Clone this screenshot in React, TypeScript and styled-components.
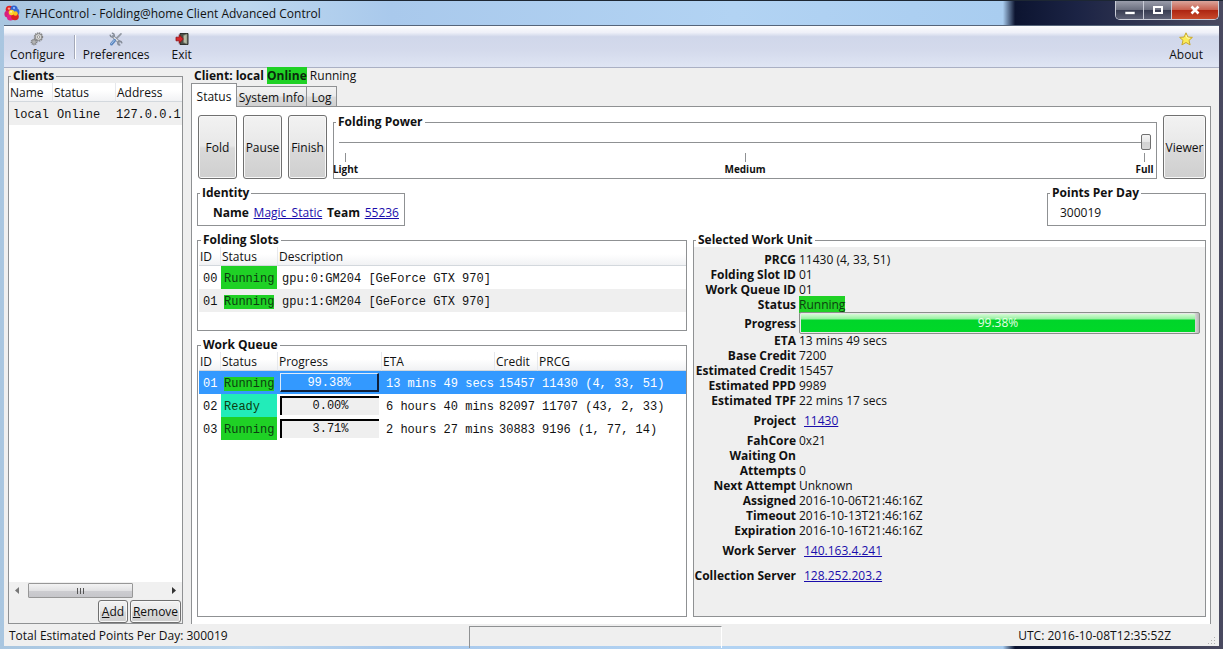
import React from 'react';
import styled, { createGlobalStyle, css } from 'styled-components';

const LINE = '#8f9193';
const FACE = '#efefef';
const GREEN = '#1fd125';
const TEAL = '#22ecb9';

const Global = createGlobalStyle`
  * { box-sizing: border-box; }
  body { margin: 0; }
  body, button, input { font: 12px/15px "Open Sans", "Segoe UI", sans-serif; color: #111; }
`;

const Window = styled.div`
  display: flex;
  flex-direction: column;
  min-height: 100vh;
  padding: 0 4px 3px;
  border-top: 1px solid #1d2733;
  background: linear-gradient(90deg, #a9c6e0 0, #bdd7ee 20%, #a9c9ec 32%, #b2d3f3 60%, #a9cdf0 82%, #0c1430 83%, #1b2344 88%, #4a4a60 100%);
`;

const TitleBar = styled.header`
  display: flex;
  align-items: flex-start;
  height: 25px;
  border-bottom: 1px solid #56657a;
`;

const TitleText = styled.h1`
  display: flex;
  align-items: center;
  gap: 5px;
  flex: 1;
  margin: 0;
  height: 24px;
  font-size: 12px;
  font-weight: 400;
  white-space: nowrap;
`;

const Caption = styled.div`
  display: flex;
  border: 1px solid #c9ccd6;
  border-top: 0;
  border-radius: 0 0 5px 5px;
  overflow: hidden;
`;

const CaptionButton = styled.button<{ $close?: boolean }>`
  display: grid;
  place-items: center;
  width: ${p => (p.$close ? 46 : 28)}px;
  height: 18px;
  padding: 0;
  border: 0;
  border-right: ${p => (p.$close ? 0 : 1)}px solid #c9ccd6;
  background: ${p => p.$close
    ? 'linear-gradient(#dba59b 0, #c8614f 48%, #ac2410 50%, #c84a2c 100%)'
    : 'linear-gradient(#9a9dab 0, #6c7080 48%, #363b50 50%, #5d6175 100%)'};
`;

const Client = styled.div`
  display: flex;
  flex-direction: column;
  flex: 1;
  background: ${FACE};
`;

const Toolbar = styled.nav`
  display: flex;
  align-items: center;
  height: 42px;
  padding: 0 12px 0 2px;
  border-bottom: 1px solid #aab0c4;
  background: linear-gradient(#fdfdfe 0, #eef0f8 16%, #d0d7ea 26%, #d4daec 60%, #dfe5f4 100%);
`;

const ToolButton = styled.button<{ $gap?: number; $end?: boolean }>`
  display: flex;
  flex-direction: column;
  align-items: center;
  padding: 0 4px;
  margin-left: ${p => (p.$end ? 'auto' : `${p.$gap || 0}px`)};
  border: 0;
  background: none;
  svg { display: block; }
`;

const ToolSeparator = styled.span`
  width: 2px;
  height: 24px;
  margin-left: 5px;
  border-left: 1px solid #a3a8b8;
  border-right: 1px solid #fff;
`;

const Body = styled.main`
  display: flex;
  flex: 1;
  gap: 8px;
  padding: 0 8px 0 4px;
`;

const Frame = styled.fieldset`
  display: flex;
  flex-direction: column;
  min-width: 0;
  margin: 0;
  padding: 0;
  border: 1px solid ${LINE};
`;

const Legend = styled.legend`
  margin-left: 2px;
  padding: 0 2px;
  height: 14px;
  line-height: 14px;
  font-weight: 700;
  white-space: nowrap;
`;

const Sidebar = styled(Frame)`
  width: 175px;
  margin-top: 1px;
`;

const ClientList = styled.div`
  flex: 1;
  overflow: hidden;
  background: #fff;
`;

const Grid = styled.table`
  width: 100%;
  table-layout: fixed;
  border-collapse: separate;
  border-spacing: 0;
  white-space: nowrap;
`;

const HeadCell = styled.th`
  height: 19px;
  padding: 1px 2px 0 1px;
  font-weight: 400;
  text-align: left;
  border-right: 1px solid #e6e8ec;
  border-bottom: 1px solid #d3d8dd;
  background: linear-gradient(#fff 40%, #f1f2f4);
  &:last-child { border-right: 0; }
`;

const Row = styled.tr<{ $tone?: 'odd' | 'selected' }>`
  background: ${p => (p.$tone === 'selected' ? '#3399ff' : p.$tone === 'odd' ? FACE : '#fff')};
  color: ${p => (p.$tone === 'selected' ? '#fff' : '#111')};
`;

const Cell = styled.td`
  height: 23px;
  padding: 2px 0 0 4px;
  overflow: hidden;
  font: 12px/16px "Liberation Mono", "Courier New", monospace;
`;

const AddressCell = styled(Cell)`
  padding-left: 0;
`;

const BarCell = styled(Cell)`
  padding: 0 3px 0 2px;
`;

const StatusCell = styled(Cell)<{ $fill?: string }>`
  color: #0c3d10;
  padding-left: 3px;
  ${p => p.$fill && css`background: ${p.$fill}; border-right: 1px solid #fff;`}
`;

const Mark = styled.span`
  background: ${GREEN};
  color: #0c3d10;
`;

const StrongMark = styled(Mark)`
  color: #0a2a0c;
`;

const CellBar = styled.div<{ $selected?: boolean }>`
  height: 19px;
  line-height: 17px;
  text-align: center;
  background: ${p => (p.$selected ? '#3399ff' : FACE)};
  border: solid #000;
  border-width: 2px 0 0 2px;
  ${p => p.$selected && css`
    line-height: 19px;
    border-width: 1px 2px 2px 1px;
    border-color: #dcebfb #10203a #10203a #dcebfb;
  `}
`;

const Scroll = styled.div`
  display: flex;
  align-items: center;
  justify-content: space-between;
  height: 17px;
  padding: 0 6px;
  background: #f0f0f0;
`;

const ScrollThumb = styled.div`
  display: flex;
  justify-content: center;
  align-items: center;
  gap: 2px;
  width: 105px;
  height: 15px;
  margin: 0 36px 0 5px;
  border: 1px solid #979797;
  border-radius: 1px;
  background: linear-gradient(#f3f3f3 0, #e2e2e4 50%, #cdcdd1 52%, #c6c6ca 100%);
  i { width: 1px; height: 6px; background: #555; }
`;

const PushButton = styled.button<{ $w?: number }>`
  width: ${p => (p.$w ? `${p.$w}px` : 'auto')};
  padding: 0;
  border: 1px solid #707070;
  border-radius: 3px;
  box-shadow: inset 0 0 0 1px #f8f8f8;
  background: linear-gradient(#f2f2f2 0, #e8e8e8 48%, #dadada 52%, #cfcfcf 100%);
  white-space: nowrap;
`;

const SideActions = styled.div`
  display: flex;
  justify-content: flex-end;
  gap: 2px;
  height: 24px;
  padding: 1px 1px 0;
`;

const Content = styled.section`
  display: flex;
  flex-direction: column;
  flex: 1;
  min-width: 0;
`;

const Heading = styled.h2`
  margin: 0;
  padding: 1px 0 0 3px;
  height: 15px;
  font-size: 12px;
  line-height: 14px;
`;

const Activity = styled.span`
  font-weight: 400;
`;

const Tabs = styled.div`
  display: flex;
  align-items: flex-end;
  height: 23px;
`;

const Tab = styled.button<{ $active?: boolean; $w: number }>`
  width: ${p => p.$w}px;
  height: 20px;
  padding: 1px 0 0;
  border: 1px solid ${LINE};
  border-left-width: 0;
  border-bottom: 0;
  background: linear-gradient(#f2f2f2 0, #ebebeb 48%, #dcdcdc 52%, #d0d0d0 100%);
  white-space: nowrap;
  ${p => p.$active && css`
    height: 24px;
    margin-bottom: -1px;
    padding: 2px 0 0;
    border-left-width: 1px;
    background: #fff;
    z-index: 1;
  `}
`;

const Panel = styled.div`
  display: flex;
  flex-direction: column;
  flex: 1;
  gap: 7px;
  padding: 8px 4px 7px 5px;
  border: 1px solid ${LINE};
  border-bottom: 0;
  background: #fff;
`;

const Controls = styled.div`
  display: flex;
  gap: 6px;
  height: 64px;
  padding-left: 1px;
`;

const Power = styled(Frame)`
  flex: 1;
`;

const Range = styled.input`
  appearance: none;
  height: 16px;
  margin: 5px 5px 0;
  background: linear-gradient(${LINE}, ${LINE}) center / 100% 1px no-repeat;
  &::-webkit-slider-thumb {
    appearance: none;
    width: 10px;
    height: 16px;
    border: 1px solid #707070;
    border-radius: 2px;
    background: linear-gradient(#f4f4f4 0, #e6e6e6 50%, #d2d2d2 52%, #d8d8d8 100%);
  }
`;

const Ticks = styled.div`
  display: flex;
  justify-content: space-between;
  padding: 3px 11px 0;
`;

const Tick = styled.span`
  display: flex;
  flex-direction: column;
  align-items: center;
  width: 1px;
  font-size: 10px;
  line-height: 14px;
  font-weight: 700;
  white-space: nowrap;
  &::before {
    content: '';
    width: 1px;
    height: 9px;
    background: ${LINE};
  }
`;

const Facts = styled.div`
  display: flex;
  justify-content: space-between;
  height: 40px;
`;

const Identity = styled(Frame)`
  width: 208px;
`;

const IdentityLine = styled.div`
  display: flex;
  justify-content: space-between;
  padding: 5px 5px 0 15px;
  white-space: nowrap;
`;

const Points = styled(Frame)`
  width: 159px;
`;

const PointsValue = styled.div`
  padding: 5px 12px 0;
`;

const Link = styled.a`
  color: #1a0dab;
  text-decoration: underline;
`;

const Work = styled.div`
  display: grid;
  grid-template-columns: 490fr 513fr;
  gap: 6px;
  flex: 1;
`;

const Lists = styled.div`
  display: flex;
  flex-direction: column;
  gap: 7px;
  min-width: 0;
`;

const Slots = styled(Frame)`
  height: 98px;
  padding: 0 0 0 1px;
`;

const Queue = styled(Frame)`
  flex: 1;
  padding: 0 0 0 1px;
`;

const Details = styled.dl`
  flex: 1;
  margin: 0;
  padding: 5px 5px 0 0;
  background: ${FACE};
`;

const Detail = styled.div<{ $h?: number }>`
  display: grid;
  grid-template-columns: 102px 1fr;
  gap: 3px;
  align-items: center;
  height: ${p => p.$h || 15}px;
  white-space: nowrap;
  dt { font-weight: 700; text-align: right; }
  dd { margin: 0; }
  dd > a { margin-left: 5px; }
`;

const UnitBar = styled.div`
  display: flex;
  height: 22px;
  padding: 1px 4px 1px 1px;
  border: 1px solid #8a8f8a;
  border-radius: 2px;
  background: linear-gradient(90deg, #e8e8e8 calc(100% - 6px), #b5b5b5);
`;

const UnitFill = styled.div`
  flex: 1;
  color: #e6ffe6;
  line-height: 18px;
  text-align: center;
  background: linear-gradient(#d6fbd6 0, #96f0a0 5px, #00d52a 6px, #00d828 100%);
`;

const StatusBar = styled.footer`
  display: grid;
  grid-template-columns: 465fr 253fr 497fr;
  height: 22px;
  line-height: 24px;
  white-space: nowrap;
`;

const Total = styled.span`
  padding-left: 5px;
`;

const ActivityWell = styled.div`
  margin-top: 2px;
  border: 1px solid ${LINE};
  border-right-color: #fff;
  border-bottom: 0;
`;

const Clock = styled.div`
  display: flex;
  justify-content: flex-end;
  align-items: flex-end;
  gap: 36px;
`;

const Logo = () => (
  <svg width="16" height="16" viewBox="0 0 16 16" aria-hidden="true">
    <circle cx="5.500" cy="4.500" r="3.800" fill="#e2231f" />
    <circle cx="10" cy="4" r="3.600" fill="#2f63cf" />
    <circle cx="4" cy="9" r="3.600" fill="#d5207c" />
    <circle cx="12" cy="7" r="3.400" fill="#3a6ad8" />
    <circle cx="6.500" cy="12" r="3.600" fill="#e3208a" />
    <circle cx="11" cy="11.500" r="3.800" fill="#dd2420" />
    <circle cx="7.500" cy="7.500" r="2.800" fill="#fbd62c" />
    <circle cx="11.500" cy="8.500" r="2.200" fill="#f9c51d" />
    <circle cx="5" cy="3.600" r="1.200" fill="#ff9a8c" />
    <circle cx="10" cy="3" r="1.100" fill="#9fc4ff" />
    <circle cx="7" cy="6.800" r="1" fill="#fff4a8" />
  </svg>
);

const GearsIcon = () => (
  <svg width="16" height="16" viewBox="0 0 16 16" fill="none" aria-hidden="true">
    <circle cx="9.500" cy="6" r="4" stroke="#858585" strokeWidth="1.400" strokeDasharray="1.400 .7" />
    <circle cx="9.500" cy="6" r="3.300" fill="#dcdcda" stroke="#777" strokeWidth=".8" />
    <circle cx="9.500" cy="6" r="1.300" fill="#f5f5f5" stroke="#777" strokeWidth=".7" />
    <circle cx="5" cy="11" r="2.700" stroke="#858585" strokeWidth="1.400" strokeDasharray="1.200 .6" />
    <circle cx="5" cy="11" r="2" fill="#dcdcda" stroke="#777" strokeWidth=".8" />
    <circle cx="5" cy="11" r=".8" fill="#f5f5f5" stroke="#777" strokeWidth=".5" />
  </svg>
);

const ToolsIcon = () => (
  <svg width="16" height="16" viewBox="0 0 16 16" fill="none" strokeLinecap="round" aria-hidden="true">
    <path d="M5 5.500 11 11" stroke="#858c98" strokeWidth="3" />
    <path d="M5 5.500 11 11" stroke="#e3e6ea" strokeWidth="1.400" />
    <path d="M2.200 4.200C2.400 6.600 6.200 6.800 6.300 4.500 6.300 3.200 5.400 2.400 4.400 2.200M13.800 11.800C13.400 9.400 9.900 9.400 9.800 11.700 9.800 13 10.700 13.900 11.800 14" stroke="#858c98" strokeWidth="1.500" />
    <path d="M13 2.800 8.800 7.200" stroke="#9399a3" strokeWidth="1.700" />
    <path d="M6.500 9.500 3.500 13" stroke="#5b86bf" strokeWidth="3" />
    <path d="M6.200 9.300 3.500 12.500" stroke="#a9c7ea" strokeWidth="1" />
  </svg>
);

const ExitIcon = () => (
  <svg width="16" height="16" viewBox="0 0 16 16" aria-hidden="true">
    <path d="M6 2.500h8v11H6z" fill="#4d5148" stroke="#2f312d" />
    <path d="M9.500 4.500 13 3v10l-3.500-1.500z" fill="#b5bba3" stroke="#7a7d70" strokeWidth=".6" />
    <path d="M2 6.200h3.200V3.800L9.300 8l-4.100 4.200V9.800H2z" fill="#d8262a" stroke="#8e1114" strokeWidth=".8" />
  </svg>
);

const StarIcon = () => (
  <svg width="16" height="16" viewBox="0 0 16 16" aria-hidden="true">
    <path d="M8 1.800 9.900 6l4.500.4-3.400 3 1.100 4.500L8 11.500l-4.100 2.400L5 9.400l-3.400-3L6.100 6z" fill="#fbec5a" stroke="#c9a92c" strokeLinejoin="round" />
    <path d="M8 4 9.200 7l2.600.3" fill="none" stroke="#fffbd0" strokeWidth=".8" />
  </svg>
);

const Arrow = ({ right }: { right?: boolean }) => (
  <svg width="5" height="7" viewBox="0 0 5 7" aria-hidden="true">
    <path d={right ? 'M1 0 5 3.500 1 7z' : 'M4 0 0 3.500 4 7z'} fill={right ? '#333' : '#777'} />
  </svg>
);

const Grip = () => (
  <svg width="12" height="12" viewBox="0 0 12 12" fill="#b0b0b0" aria-hidden="true">
    <path d="M7 1h1v1H7zM4 4h1v1H4zM7 4h1v1H7zM1 7h1v1H1zM4 7h1v1H4zM7 7h1v1H7z" />
  </svg>
);

const Columns = ({ widths }: { widths: (number | undefined)[] }) => (
  <colgroup>
    {widths.map((w, i) => <col key={i} width={w} />)}
  </colgroup>
);

const queue = [
  { id: '01', status: 'Running', progress: '99.38%', eta: '13 mins 49 secs', credit: '15457', prcg: '11430 (4, 33, 51)', selected: true },
  { id: '02', status: 'Ready', fill: TEAL, progress: '0.00%', eta: '6 hours 40 mins', credit: '82097', prcg: '11707 (43, 2, 33)' },
  { id: '03', status: 'Running', fill: GREEN, progress: '3.71%', eta: '2 hours 27 mins', credit: '30883', prcg: '9196 (1, 77, 14)' },
];

const details: { label: string; value: React.ReactNode; h?: number }[] = [
  { label: 'PRCG', value: '11430 (4, 33, 51)' },
  { label: 'Folding Slot ID', value: '01' },
  { label: 'Work Queue ID', value: '01' },
  { label: 'Status', value: <Mark>Running</Mark> },
  { label: 'Progress', value: <UnitBar><UnitFill>99.38%</UnitFill></UnitBar>, h: 21 },
  { label: 'ETA', value: '13 mins 49 secs' },
  { label: 'Base Credit', value: '7200' },
  { label: 'Estimated Credit', value: '15457' },
  { label: 'Estimated PPD', value: '9989' },
  { label: 'Estimated TPF', value: '22 mins 17 secs' },
  { label: 'Project', value: <Link href="#project">11430</Link>, h: 25 },
  { label: 'FahCore', value: '0x21' },
  { label: 'Waiting On', value: '' },
  { label: 'Attempts', value: '0' },
  { label: 'Next Attempt', value: 'Unknown' },
  { label: 'Assigned', value: '2016-10-06T21:46:16Z' },
  { label: 'Timeout', value: '2016-10-13T21:46:16Z' },
  { label: 'Expiration', value: '2016-10-16T21:46:16Z' },
  { label: 'Work Server', value: <Link href="#work-server">140.163.4.241</Link>, h: 25 },
  { label: 'Collection Server', value: <Link href="#collection-server">128.252.203.2</Link>, h: 25 },
];

export default function App() {
  return (
    <Window>
      <Global />
      <TitleBar>
        <TitleText><Logo />FAHControl - Folding@home Client Advanced Control</TitleText>
        <Caption>
          <CaptionButton aria-label="Minimize">
            <svg width="12" height="12" viewBox="0 0 12 12"><path d="M1 7.500h10v3H1z" fill="#fff" stroke="#3a3f52" strokeWidth=".6" /></svg>
          </CaptionButton>
          <CaptionButton aria-label="Maximize">
            <svg width="12" height="12" viewBox="0 0 12 12"><path d="M2 3h8v6H2z" fill="none" stroke="#fff" strokeWidth="2" /></svg>
          </CaptionButton>
          <CaptionButton $close aria-label="Close">
            <svg width="12" height="12" viewBox="0 0 12 12"><path d="m2.500 2.500 7 7m0-7-7 7" stroke="#fff" strokeWidth="2.600" /></svg>
          </CaptionButton>
        </Caption>
      </TitleBar>
      <Client>
        <Toolbar>
          <ToolButton><GearsIcon />Configure</ToolButton>
          <ToolSeparator />
          <ToolButton $gap={3}><ToolsIcon />Preferences</ToolButton>
          <ToolButton $gap={14}><ExitIcon />Exit</ToolButton>
          <ToolButton $end><StarIcon />About</ToolButton>
        </Toolbar>
        <Body>
          <Sidebar>
            <Legend>Clients</Legend>
            <ClientList>
              <Grid>
                <Columns widths={[44, 63, undefined]} />
                <thead>
                  <tr><HeadCell>Name</HeadCell><HeadCell>Status</HeadCell><HeadCell>Address</HeadCell></tr>
                </thead>
                <tbody>
                  <Row $tone="odd"><Cell>local</Cell><Cell>Online</Cell><AddressCell>127.0.0.1</AddressCell></Row>
                </tbody>
              </Grid>
            </ClientList>
            <Scroll>
              <Arrow />
              <ScrollThumb><i /><i /><i /></ScrollThumb>
              <Arrow right />
            </Scroll>
            <SideActions>
              <PushButton $w={30}><u>A</u>dd</PushButton>
              <PushButton $w={51}><u>R</u>emove</PushButton>
            </SideActions>
          </Sidebar>
          <Content>
            <Heading>Client: local <StrongMark>Online</StrongMark> <Activity>Running</Activity></Heading>
            <Tabs role="tablist">
              <Tab role="tab" aria-selected="true" $active $w={46}>Status</Tab>
              <Tab role="tab" aria-selected="false" $w={70}>System Info</Tab>
              <Tab role="tab" aria-selected="false" $w={30}>Log</Tab>
            </Tabs>
            <Panel>
              <Controls>
                <PushButton $w={39}>Fold</PushButton>
                <PushButton $w={39}>Pause</PushButton>
                <PushButton $w={39}>Finish</PushButton>
                <Power>
                  <Legend>Folding Power</Legend>
                  <Range type="range" min={0} max={100} defaultValue={100} aria-label="Folding Power" />
                  <Ticks><Tick>Light</Tick><Tick>Medium</Tick><Tick>Full</Tick></Ticks>
                </Power>
                <PushButton $w={43}>Viewer</PushButton>
              </Controls>
              <Facts>
                <Identity>
                  <Legend>Identity</Legend>
                  <IdentityLine>
                    <b>Name</b><Link href="#name">Magic_Static</Link><b>Team</b><Link href="#team">55236</Link>
                  </IdentityLine>
                </Identity>
                <Points>
                  <Legend>Points Per Day</Legend>
                  <PointsValue>300019</PointsValue>
                </Points>
              </Facts>
              <Work>
                <Lists>
                  <Slots>
                    <Legend>Folding Slots</Legend>
                    <Grid>
                      <Columns widths={[22, 57, undefined]} />
                      <thead>
                        <tr><HeadCell>ID</HeadCell><HeadCell>Status</HeadCell><HeadCell>Description</HeadCell></tr>
                      </thead>
                      <tbody>
                        <Row><Cell>00</Cell><StatusCell $fill={GREEN}>Running</StatusCell><Cell>gpu:0:GM204 [GeForce GTX 970]</Cell></Row>
                        <Row $tone="odd"><Cell>01</Cell><StatusCell><Mark>Running</Mark></StatusCell><Cell>gpu:1:GM204 [GeForce GTX 970]</Cell></Row>
                      </tbody>
                    </Grid>
                  </Slots>
                  <Queue>
                    <Legend>Work Queue</Legend>
                    <Grid>
                      <Columns widths={[22, 57, 104, 113, 43, undefined]} />
                      <thead>
                        <tr>
                          {['ID', 'Status', 'Progress', 'ETA', 'Credit', 'PRCG'].map(h => <HeadCell key={h}>{h}</HeadCell>)}
                        </tr>
                      </thead>
                      <tbody>
                        {queue.map(q => (
                          <Row key={q.id} $tone={q.selected ? 'selected' : undefined}>
                            <Cell>{q.id}</Cell>
                            <StatusCell $fill={q.fill}>{q.fill ? q.status : <Mark>{q.status}</Mark>}</StatusCell>
                            <BarCell><CellBar $selected={q.selected}>{q.progress}</CellBar></BarCell>
                            <Cell>{q.eta}</Cell>
                            <Cell>{q.credit}</Cell>
                            <Cell>{q.prcg}</Cell>
                          </Row>
                        ))}
                      </tbody>
                    </Grid>
                  </Queue>
                </Lists>
                <Frame>
                  <Legend>Selected Work Unit</Legend>
                  <Details>
                    {details.map(d => (
                      <Detail key={d.label} $h={d.h}><dt>{d.label}</dt><dd>{d.value}</dd></Detail>
                    ))}
                  </Details>
                </Frame>
              </Work>
            </Panel>
          </Content>
        </Body>
        <StatusBar>
          <Total>Total Estimated Points Per Day: 300019</Total>
          <ActivityWell />
          <Clock><span>UTC: 2016-10-08T12:35:52Z</span><Grip /></Clock>
        </StatusBar>
      </Client>
    </Window>
  );
}
